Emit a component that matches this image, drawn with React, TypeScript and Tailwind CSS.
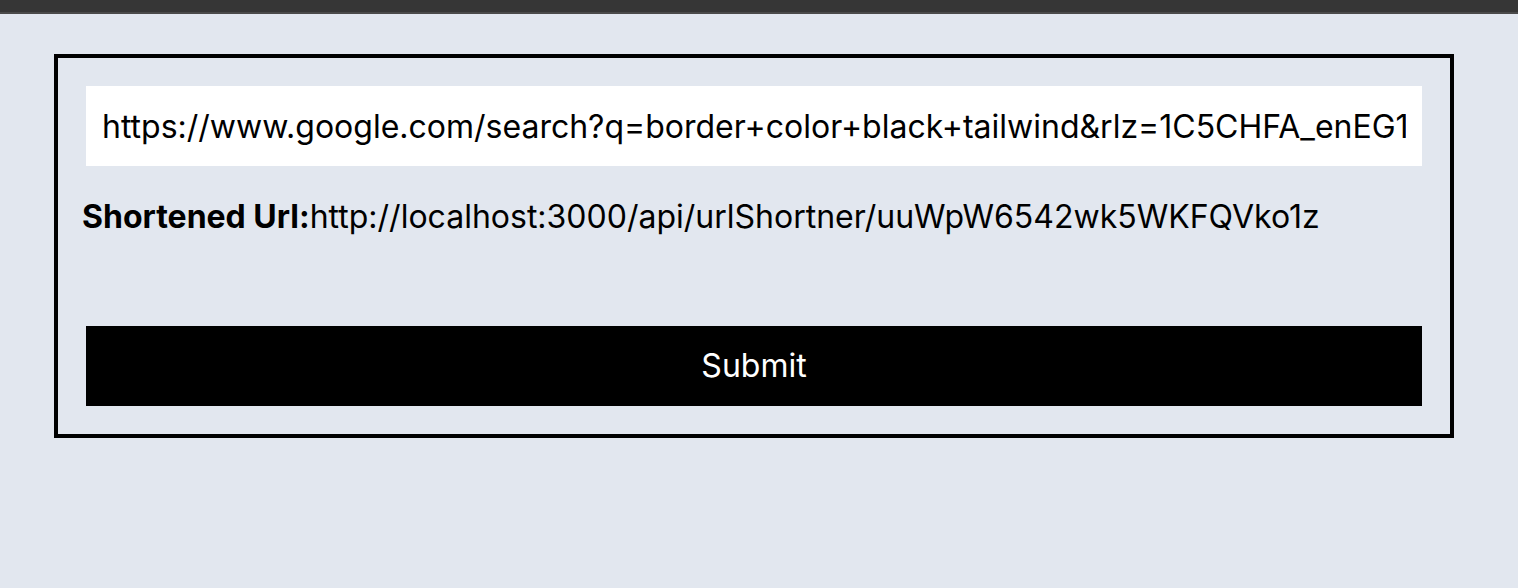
import { useState } from 'react';

export default function App() {
  const [url, setUrl] = useState('https://www.google.com/search?q=border+color+black+tailwind&rlz=1C5CHFA_enEG1');
  const shortUrl = 'http://localhost:3000/api/urlShortner/uuWpW6542wk5WKFQVko1z';

  return (
    <div className="min-h-screen bg-[#e2e7ef] font-['Inter',sans-serif] text-black">
      <div className="h-[14px] bg-[#363636] border-b-2 border-[#4a4a4a]" />
      <div className="px-[54px] pt-[40px]">
        <form
          onSubmit={(e) => e.preventDefault()}
          className="w-[1400px] border-4 border-black px-6 py-6 flex flex-col"
        >
          <input
            value={url}
            onChange={(e) => setUrl(e.target.value)}
            className="mx-1 mt-1 h-[80px] bg-white px-4 text-[32px] outline-none"
          />
          <p className="mt-[32px] text-[32px] leading-[38px]">
            <span className="font-bold">Shortened Url:</span>
            {shortUrl}
          </p>
          <button
            type="submit"
            className="mx-1 mb-1 mt-[90px] h-[80px] bg-black text-white text-[32px]"
          >
            Submit
          </button>
        </form>
      </div>
    </div>
  );
}
